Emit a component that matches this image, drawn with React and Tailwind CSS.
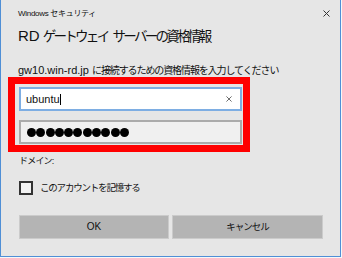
import React from 'react';

const jp = "font-['Liberation_Sans','Noto_Sans_CJK_JP',sans-serif]";

function CloseIcon({ size = 7, color = '#333' }) {
  return (
    <svg width={size} height={size} viewBox="0 0 7 7">
      <path d="M0.5 0.5 L6.5 6.5 M6.5 0.5 L0.5 6.5" stroke={color} strokeWidth="1" fill="none" />
    </svg>
  );
}

export default function App() {
  const dots = Array.from({ length: 11 });

  return (
    <div className={`w-[342px] h-[258px] bg-[#f7f7f7] ${jp} text-[#111]`}>
      <div className="w-[341px] h-[257px] bg-[#e6e6e6] border-l border-r border-b border-[#4f8fd6] flex flex-col pl-[17px] pr-[10px]">
        {/* title bar */}
        <div className="mt-[7px] h-[13px] flex items-center justify-between">
          <span className="text-[8px] leading-[13px] tracking-[-0.3px]">Windows セキュリティ</span>
          <CloseIcon />
        </div>

        <div className="mt-[6px] h-[20px] leading-[20px] whitespace-nowrap flex items-baseline">
          <span className="text-[15px] mr-[3px]">RD</span>
          <span className="text-[13.5px] tracking-[-2.7px]">ゲートウェイ</span>
          <span className="text-[13.5px] tracking-[-2.7px] ml-[5px]">サーバーの資格情報</span>
        </div>

        <div className="mt-[16px] h-[14px] leading-[14px] whitespace-nowrap">
          <span className="text-[11px]">gw10.win-rd.jp </span>
          <span className="text-[10px] tracking-[-1.1px]">に接続するための資格情報を入力してください</span>
        </div>

        {/* highlighted credential fields */}
        <div className="mt-[1px] -ml-[10px] w-[242px] border-[7px] border-[#ff0000] pl-[4px] pr-[1px] pt-[3px] pb-[1px] flex flex-col gap-[9px]">
          <div className="h-[24px] bg-white border-2 border-[#7eaee3] flex items-center pl-[5px] pr-[8px]">
            <span className="text-[11px] leading-none">ubuntu</span>
            <span className="w-px h-[11px] bg-black ml-[0.5px]" />
            <span className="flex-1" />
            <CloseIcon size={6} color="#555" />
          </div>
          <div className="h-[24px] bg-[#f0f0f0] border-2 border-[#ababab] flex items-center pl-[6px] gap-[0.3px]">
            {dots.map((_, i) => (
              <span key={i} className="w-[9px] h-[9px] rounded-full bg-black" />
            ))}
          </div>
        </div>

        <div className="mt-[3px] ml-[1px] h-[12px] leading-[12px] text-[9px] tracking-[-0.8px]">ドメイン:</div>

        <div className="mt-[14px] ml-[1px] h-[14px] flex items-center gap-[7px]">
          <span className="w-[14px] h-[14px] border-2 border-[#333] bg-[#f2f2f2]" />
          <span className="text-[9.5px] tracking-[-1.2px] leading-[14px]">このアカウントを記憶する</span>
        </div>

        <div className="mt-[20px] ml-[1px] flex gap-[3px]">
          <button className="w-[150px] h-[24px] bg-[#b4b4b4] border border-[#cbcbcb] text-[10px] leading-none">OK</button>
          <button className="w-[151px] h-[24px] bg-[#b4b4b4] border border-[#cbcbcb] text-[9.5px] tracking-[-1px] leading-none">キャンセル</button>
        </div>
      </div>
    </div>
  );
}
